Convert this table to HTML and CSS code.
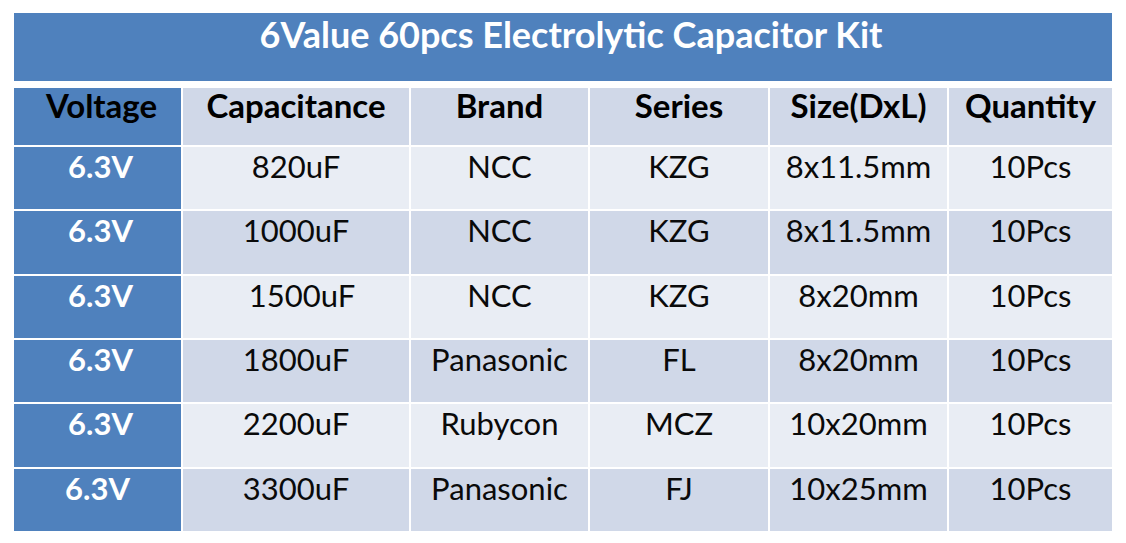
FILE: index.html
```html
<!DOCTYPE html>
<html>
<head>
<meta charset="utf-8">
<link rel="stylesheet" href="styles.css">
</head>
<body>
<div class="sheet">
  <div class="title">6Value 60pcs Electrolytic Capacitor Kit</div>
  <div class="grid">
    <div class="cell head first">Voltage</div>
    <div class="cell head">Capacitance</div>
    <div class="cell head">Brand</div>
    <div class="cell head">Series</div>
    <div class="cell head">Size(DxL)</div>
    <div class="cell head">Quantity</div>

    <div class="cell volt">6.3V</div>
    <div class="cell odd">820uF</div>
    <div class="cell odd">NCC</div>
    <div class="cell odd">KZG</div>
    <div class="cell odd">8x11.5mm</div>
    <div class="cell odd">10Pcs</div>

    <div class="cell volt">6.3V</div>
    <div class="cell even">1000uF</div>
    <div class="cell even">NCC</div>
    <div class="cell even">KZG</div>
    <div class="cell even">8x11.5mm</div>
    <div class="cell even">10Pcs</div>

    <div class="cell volt">6.3V</div>
    <div class="cell odd shift">1500uF</div>
    <div class="cell odd">NCC</div>
    <div class="cell odd">KZG</div>
    <div class="cell odd">8x20mm</div>
    <div class="cell odd">10Pcs</div>

    <div class="cell volt">6.3V</div>
    <div class="cell even">1800uF</div>
    <div class="cell even">Panasonic</div>
    <div class="cell even">FL</div>
    <div class="cell even">8x20mm</div>
    <div class="cell even">10Pcs</div>

    <div class="cell volt">6.3V</div>
    <div class="cell odd">2200uF</div>
    <div class="cell odd">Rubycon</div>
    <div class="cell odd">MCZ</div>
    <div class="cell odd">10x20mm</div>
    <div class="cell odd">10Pcs</div>

    <div class="cell volt last">6.3V</div>
    <div class="cell even">3300uF</div>
    <div class="cell even">Panasonic</div>
    <div class="cell even">FJ</div>
    <div class="cell even">10x25mm</div>
    <div class="cell even">10Pcs</div>
  </div>
</div>
</body>
</html>
```
FILE: styles.css
```css
html, body {
  margin: 0;
  padding: 0;
  background: #ffffff;
}
body {
  font-family: Lato, "Open Sans", sans-serif;
}
.sheet {
  width: 1098px;
  margin: 13px 0 0 14px;
}
.title {
  height: 68px;
  box-sizing: border-box;
  padding-top: 0;
  padding-left: 16px;
  background: #4f81bd;
  color: #ffffff;
  font-weight: 700;
  font-size: 36px;
  line-height: 1.2;
  text-align: center;
}
.grid {
  margin-top: 7px;
  display: grid;
  grid-template-columns: 167px 226px 177px 178px 177px 163px;
  grid-template-rows: 57px repeat(6, 62.33px);
  gap: 2px;
}
.cell {
  box-sizing: border-box;
  text-align: center;
  font-size: 31px;
  line-height: 1.2;
  color: #0a0a0a;
  padding-top: 1px;
}
.head {
  background: #d0d8e8;
  font-weight: 700;
  font-size: 33px;
  line-height: 1;
  color: #000000;
  padding-top: 1px;
}
.head.first {
  background: #4f81bd;
  padding-left: 8px;
}
.volt {
  background: #4f81bd;
  color: #ffffff;
  font-weight: 700;
  padding-left: 6px;
}
.volt.last {
  padding-left: 0;
}
.odd {
  background: #e9edf4;
}
.even {
  background: #d0d8e8;
}
.shift {
  padding-left: 12px;
}
```
